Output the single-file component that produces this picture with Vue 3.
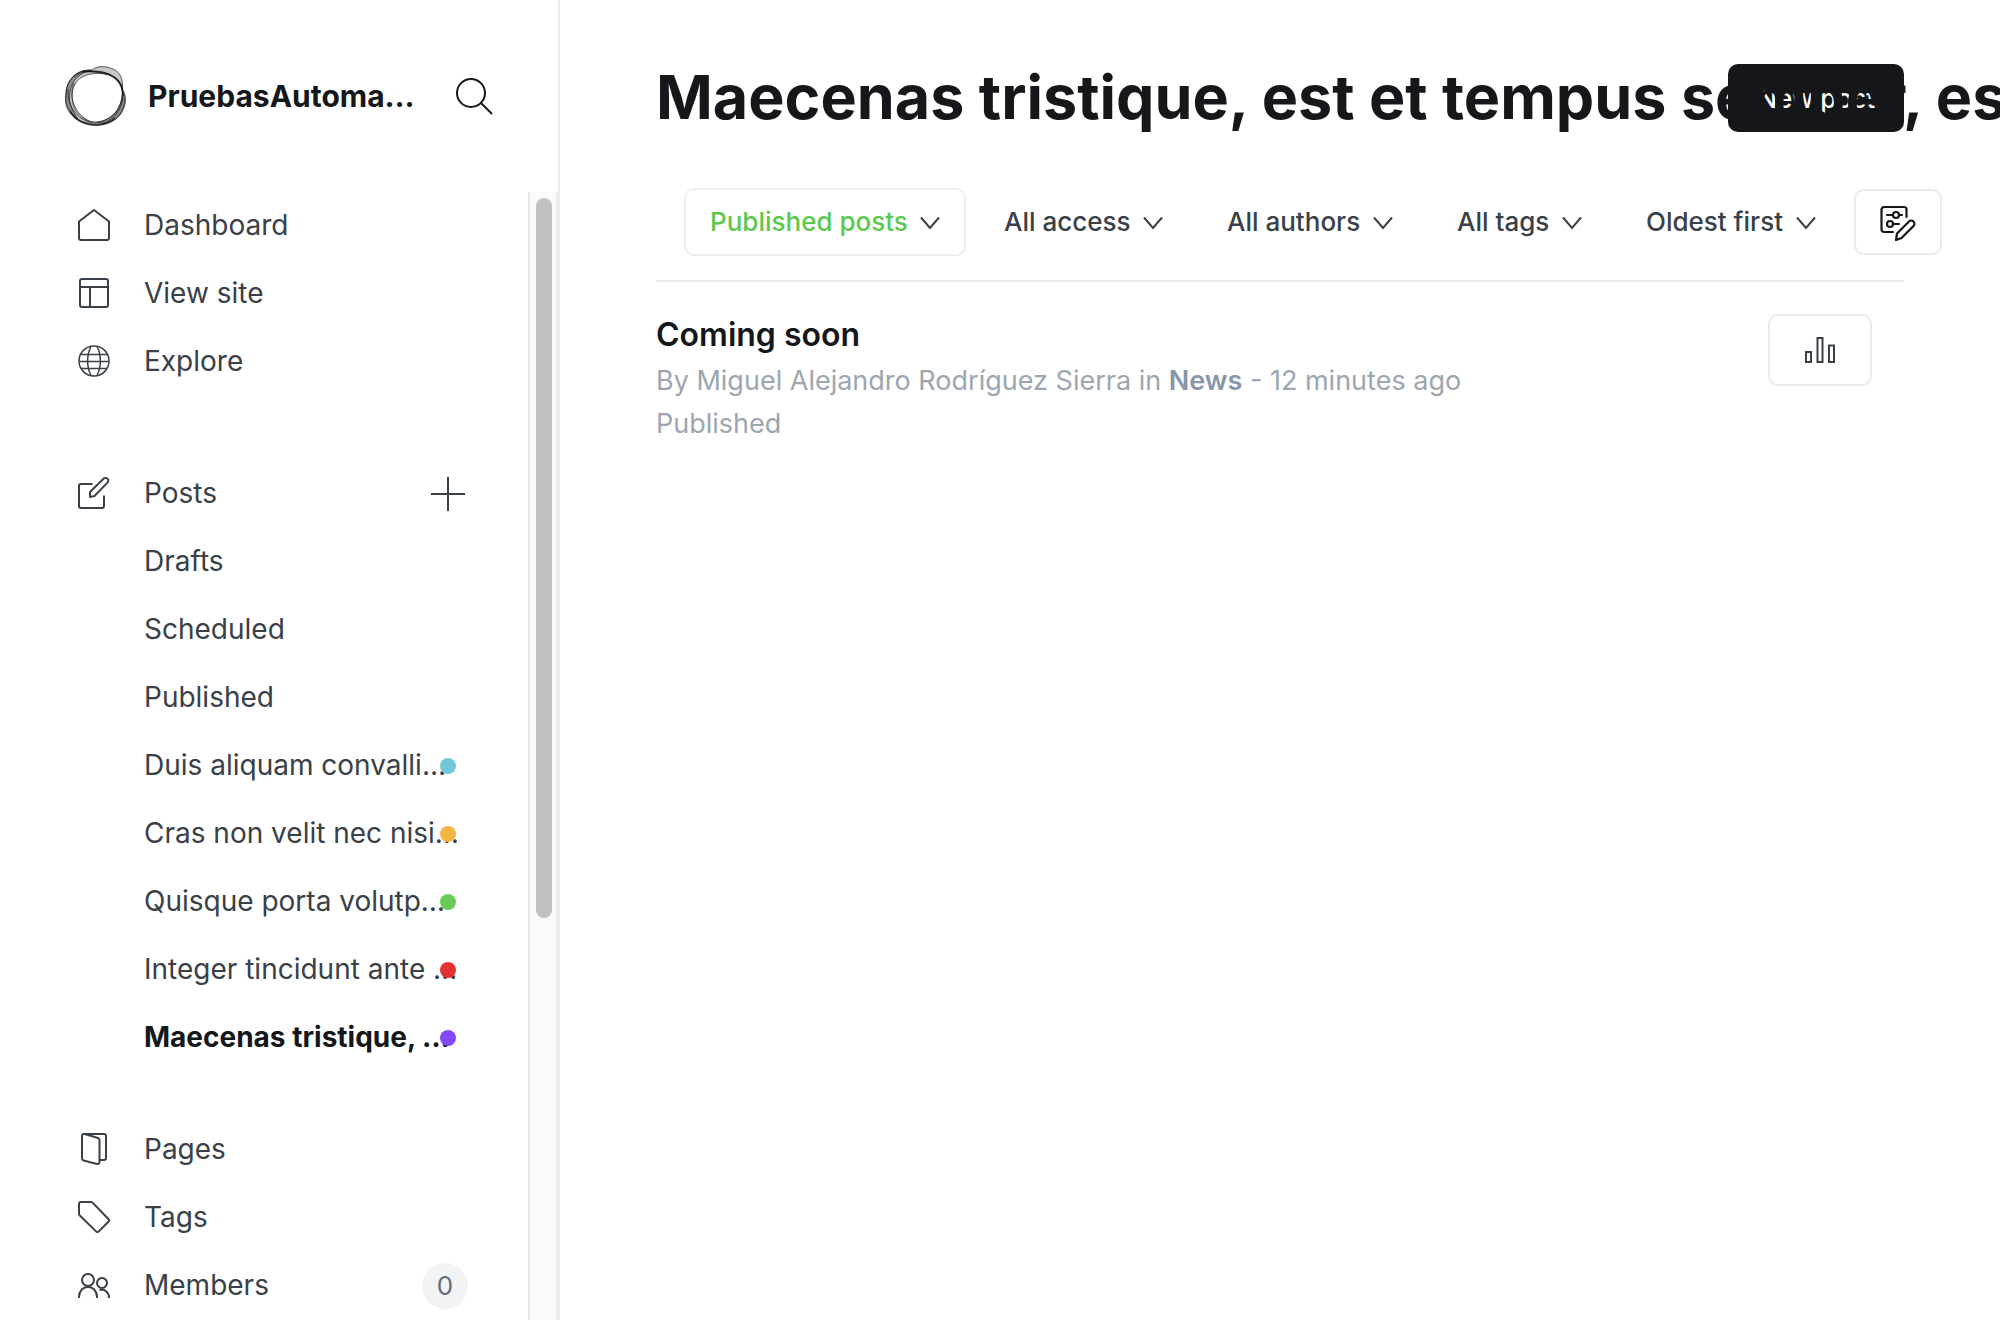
<script setup>
const topLinks = [
  { label: 'Dashboard', icon: 'home' },
  { label: 'View site', icon: 'site' },
  { label: 'Explore', icon: 'globe' },
]

const postViews = [
  { label: 'Drafts' },
  { label: 'Scheduled' },
  { label: 'Published' },
  { label: 'Duis aliquam convalli…', color: '#70c9d9' },
  { label: 'Cras non velit nec nisi…', color: '#f5b545' },
  { label: 'Quisque porta volutp…', color: '#67cc57' },
  { label: 'Integer tincidunt ante …', color: '#e23232' },
  { label: 'Maecenas tristique, …', color: '#8647f7', active: true },
]

const bottomLinks = [
  { label: 'Pages', icon: 'pages' },
  { label: 'Tags', icon: 'tag' },
  { label: 'Members', icon: 'members', count: 0 },
]

const icons = {
  home: ['M1 12.5 16 1l15 11.5V29a2 2 0 0 1-2 2H3a2 2 0 0 1-2-2z'],
  site: ['M4 2h24a2 2 0 0 1 2 2v24a2 2 0 0 1-2 2H4a2 2 0 0 1-2-2V4a2 2 0 0 1 2-2z', 'M2 10h28M12 10v20'],
  globe: [
    'M16 1a15 15 0 1 0 0 30 15 15 0 1 0 0-30z',
    'M13 1.500C8.500 10 8.500 22 13 30.500M19 1.500C23.500 10 23.500 22 19 30.500',
    'M3 9.500h26M1 16.500h30M3 23.500h26',
  ],
  edit: [
    'M14.500 7H3a2 2 0 0 0-2 2v20a2 2 0 0 0 2 2h21a2 2 0 0 0 2-2V18.500',
    'M12 20v-5L25.500 1.800a2.600 2.600 0 0 1 4 0 2.600 2.600 0 0 1 0 3.800L16.500 19z',
  ],
  pages: [
    'M22 27h4a2 2 0 0 0 2-2V3a2 2 0 0 0-2-2H6',
    'M4 3a2 2 0 0 1 2.600-2L20 5a2 2 0 0 1 1.500 2v22a2 2 0 0 1-2.500 2L5.500 27.500A2 2 0 0 1 4 25.500z',
  ],
  tag: ['M3 1h10a2 2 0 0 1 1.500.6L30.400 18a2 2 0 0 1 0 2.800L20.800 30.400a2 2 0 0 1-2.800 0L1.600 14.200A2 2 0 0 1 1 12.800V3a2 2 0 0 1 2-2z'],
  members: [
    'M10 5a6 6 0 1 0 0 12 6 6 0 1 0 0-12z',
    'M1 29v-1c0-6 4-10 9-10s9 4 9 10v1',
    'M24 9a5 5 0 1 0 0 10 5 5 0 1 0 0-10z',
    'M21.500 21c5-1.500 9.500 2 9.500 8',
  ],
}

const filters = [
  { id: 'type', name: 'Post type', value: 'Published posts', active: true },
  { id: 'access', name: 'Access', value: 'All access' },
  { id: 'author', name: 'Author', value: 'All authors' },
  { id: 'tag', name: 'Tag', value: 'All tags' },
  { id: 'order', name: 'Order', value: 'Oldest first' },
]
</script>

<template>
  <div class="app">
    <aside class="sidebar">
      <header class="brand">
        <svg class="logo" viewBox="0 0 62 62" fill="none" stroke="#111" stroke-width=".8" stroke-opacity=".8" aria-hidden="true">
          <path fill="#000" fill-opacity=".22" fill-rule="evenodd" d="M27 5C33 0 43 1 50 5C57 9 58 17 57.500 25C61 30 62 37 58 45C55 53 45 60 32 60.500C20 61 10 55 5 48C0 42 0 34 1 28C2 12 15 4 27 5zM37 8.500C45 9 53 13 55.500 18C59 26 57 38 52 46C47 53 39 57 30 57C22 57 15 52 11.500 46.500C7 40 5 28 10 19C15 10 26 8 37 8.500z" />
          <path fill="#000" fill-opacity=".3" d="M27 5.500C12 4 1 14 1 30C0 40 5 49 13 54C7 46 3 37 5 27C7 15 15 7 27 5.500z" />
          <path fill="#000" fill-opacity=".3" d="M57.500 25C58 40 50 54 32 57.500C40 60 50 56 55 49C61 41 60 30 57.500 25z" />
          <path stroke-width="1.500" d="M17 6.500C32 6 48 6 56 20C58 24 58 28 58 31M5 46C11 56 22 60 34 59.500C40 59 46 57 50 53" />
          <path d="M22 7C34 4 50 8 56 22C62 37 52 54 37 59M9 12C20 3 30 7 44 10C52 13 56 18 57 25M3 24C2 42 14 58 32 58M9 18C3 32 10 50 26 57" />
        </svg>
        <span class="site-name">PruebasAutoma…</span>
        <button class="icon-button" type="button" aria-label="Search">
          <svg width="38" height="38" viewBox="0 0 38 38" fill="none" stroke="#15171a" stroke-width="2" stroke-linecap="round" aria-hidden="true">
            <circle cx="16" cy="16" r="14" /><path d="M26 26l10.500 10.500" />
          </svg>
        </button>
      </header>

      <div class="scroll-area">
        <nav class="nav">
          <ul class="group">
            <li v-for="l in topLinks" :key="l.label" class="row">
              <a href="#" class="link">
                <svg class="icon" :class="{ fine: l.icon === 'globe' }" viewBox="0 0 32 32" aria-hidden="true"><path v-for="d in icons[l.icon]" :key="d" :d="d" /></svg>
                {{ l.label }}
              </a>
            </li>
          </ul>
          <ul class="group posts">
            <li class="row">
              <a href="#" class="link">
                <svg class="icon" viewBox="0 0 32 32" aria-hidden="true"><path v-for="d in icons.edit" :key="d" :d="d" /></svg>
                Posts
              </a>
              <button class="icon-button add" type="button" aria-label="Add post">
                <svg width="34" height="34" viewBox="0 0 34 34" stroke="#394047" stroke-width="2" aria-hidden="true"><path d="M17 0v34M0 17h34" /></svg>
              </button>
            </li>
            <li v-for="v in postViews" :key="v.label" class="row">
              <a href="#" class="link sub" :class="{ active: v.active }">{{ v.label }}</a>
              <span v-if="v.color" class="dot" :style="{ background: v.color }"></span>
            </li>
          </ul>
          <ul class="group">
            <li v-for="l in bottomLinks" :key="l.label" class="row">
              <a href="#" class="link">
                <svg class="icon" viewBox="0 0 32 32" aria-hidden="true"><path v-for="d in icons[l.icon]" :key="d" :d="d" /></svg>
                {{ l.label }}
              </a>
              <span v-if="l.count !== undefined" class="badge">{{ l.count }}</span>
            </li>
          </ul>
        </nav>
        <div class="track"><div class="thumb"></div></div>
      </div>
    </aside>

    <main class="main">
      <header class="page-head">
        <h1 class="title">Maecenas tristique, est et tempus semper, est quam pharetra magna</h1>
        <button class="new-post" type="button">New post</button>
      </header>

      <div class="filters">
        <div v-for="f in filters" :key="f.id" class="filter" :class="{ selected: f.active }">
          <select :id="f.id" :aria-label="f.name" class="select">
            <option>{{ f.value }}</option>
          </select>
          <svg class="chevron" viewBox="0 0 20 14" aria-hidden="true"><path d="M1 1.500l9 10.500 9-10.500" /></svg>
        </div>
        <button class="box-button view-button" type="button" aria-label="Edit view">
          <svg width="36" height="36" viewBox="0 0 36 36" fill="none" stroke="#15171a" stroke-width="2.200" stroke-linecap="round" stroke-linejoin="round" aria-hidden="true">
            <path d="M13 27H4a2.500 2.500 0 0 1-2.500-2.500V4.500A2.500 2.500 0 0 1 4 2h20a2.500 2.500 0 0 1 2.500 2.500V12" />
            <path d="M7 10h6M19 10h3M13 19h6" />
            <circle cx="16" cy="10" r="3" /><circle cx="10" cy="19" r="3" />
            <path d="M16 35l1-6.500L29 16.500a3 3 0 0 1 4.500 4.500L21.500 33z" />
          </svg>
        </button>
      </div>

      <article class="post">
        <div>
          <h3 class="post-title">Coming soon</h3>
          <p class="meta">By Miguel Alejandro Rodríguez Sierra in <span class="tag">News</span> - 12 minutes ago</p>
          <p class="meta">Published</p>
        </div>
        <button class="box-button stats-button" type="button" aria-label="Analytics">
          <svg width="32" height="28" viewBox="0 0 32 28" fill="none" stroke="#394047" stroke-width="2" aria-hidden="true">
            <path d="M2 16h5v10H2zM13.500 2h5v24h-5zM25 9.500h5V26h-5z" />
          </svg>
        </button>
      </article>
    </main>
  </div>
</template>

<style>
body {
  margin: 0;
  background: #fff;
}
</style>

<style scoped>
.app {
  display: flex;
  height: 100vh;
  overflow: hidden;
  font-family: Inter, "Liberation Sans", sans-serif;
  font-size: 28px;
  color: #394047;
}

button,
select {
  font: inherit;
  color: inherit;
  background: none;
  border: 0;
  margin: 0;
  padding: 0;
}

button {
  cursor: pointer;
}

svg {
  display: block;
}

/* Sidebar */
.sidebar {
  display: flex;
  flex-direction: column;
  flex: none;
  box-sizing: border-box;
  width: 560px;
  border-right: 2px solid #ebebeb;
}

.brand {
  display: flex;
  align-items: center;
  flex: none;
  box-sizing: border-box;
  height: 192px;
  padding: 0 65px;
}

.logo {
  width: 62px;
  height: 62px;
  margin-right: 21px;
}

.site-name {
  flex: 1;
  font-size: 30px;
  font-weight: 700;
  color: #15171a;
  white-space: nowrap;
}

.icon-button {
  display: flex;
}

.scroll-area {
  display: flex;
  flex: 1;
  min-height: 0;
}

.nav {
  flex: 1;
  min-width: 0;
  overflow: hidden;
}

.group {
  list-style: none;
  margin: 0 0 64px;
  padding: 0;
}

.posts {
  margin-bottom: 44px;
}

.row {
  position: relative;
  display: flex;
  align-items: center;
  height: 68px;
}

.link {
  display: flex;
  align-items: center;
  gap: 34px;
  flex: 1;
  padding: 0 0 2px 78px;
  color: inherit;
  text-decoration: none;
  white-space: nowrap;
}

.sub {
  padding-left: 144px;
}

.active {
  font-weight: 700;
  color: #15171a;
}

.icon {
  width: 32px;
  height: 32px;
  fill: none;
  stroke: #394047;
  stroke-width: 2;
  stroke-linejoin: round;
}

.fine {
  stroke-width: 1.5;
}

.add {
  margin-right: 63px;
}

.dot {
  position: absolute;
  right: 72px;
  width: 16px;
  height: 16px;
  border-radius: 50%;
}

.badge {
  width: 46px;
  margin-right: 60px;
  border-radius: 23px;
  background: #f1f3f4;
  color: #626d79;
  font-size: 26px;
  line-height: 46px;
  text-align: center;
}

.track {
  flex: none;
  box-sizing: border-box;
  width: 30px;
  padding: 6px 4px 6px 6px;
  border-left: 2px solid #e8e8e8;
  border-right: 2px solid #ededed;
  background: #fafafa;
}

.thumb {
  width: 16px;
  height: calc(64% + 6px);
  border-radius: 8px;
  background: #c1c1c1;
}

/* Main */
.main {
  flex: 1;
  min-width: 0;
  padding: 64px 96px;
  overflow: hidden;
}

.page-head {
  display: flex;
  align-items: center;
  height: 68px;
}

.title {
  position: relative;
  z-index: 1;
  flex: 1;
  min-width: 0;
  margin: 0;
  padding-bottom: 2px;
  font-size: 61px;
  font-weight: 700;
  line-height: 66px;
  color: #15171a;
  white-space: nowrap;
  pointer-events: none;
}

.new-post {
  flex: none;
  height: 68px;
  padding: 0 29px;
  border-radius: 10px;
  background: #15171a;
  color: #fff;
  font-size: 26px;
  font-weight: 500;
}

.filters {
  display: flex;
  align-items: center;
  gap: 12px;
  margin: 56px 0 24px 28px;
}

.filter {
  position: relative;
  flex: none;
  box-sizing: border-box;
  height: 68px;
  border: 2px solid transparent;
  border-radius: 10px;
}

.selected {
  border-color: #ebeef0;
  color: #5dc84e;
}

.select {
  height: 64px;
  padding: 0 56px 2px 24px;
  appearance: none;
  font-size: 26px;
  font-weight: 500;
}

.chevron {
  position: absolute;
  top: 26px;
  right: 24px;
  width: 20px;
  height: 14px;
  fill: none;
  stroke: #394047;
  stroke-width: 2;
  pointer-events: none;
}

.box-button {
  display: flex;
  align-items: center;
  justify-content: center;
  flex: none;
  box-sizing: border-box;
  border: 2px solid #ebebeb;
  border-radius: 10px;
}

.view-button {
  width: 88px;
  height: 66px;
  padding-top: 2px;
}

.stats-button {
  width: 104px;
  height: 72px;
}

.post {
  display: flex;
  align-items: flex-start;
  justify-content: space-between;
  padding: 32px 32px 32px 0;
  border-top: 2px solid #ebebeb;
}

.post-title {
  margin: 0 0 3px;
  font-size: 32px;
  font-weight: 600;
  line-height: 42px;
  color: #15171a;
}

.meta {
  margin: 0;
  font-size: 27px;
  line-height: 43px;
  color: #9ba6b1;
}

.tag {
  font-weight: 600;
  color: #8796a8;
}
</style>
